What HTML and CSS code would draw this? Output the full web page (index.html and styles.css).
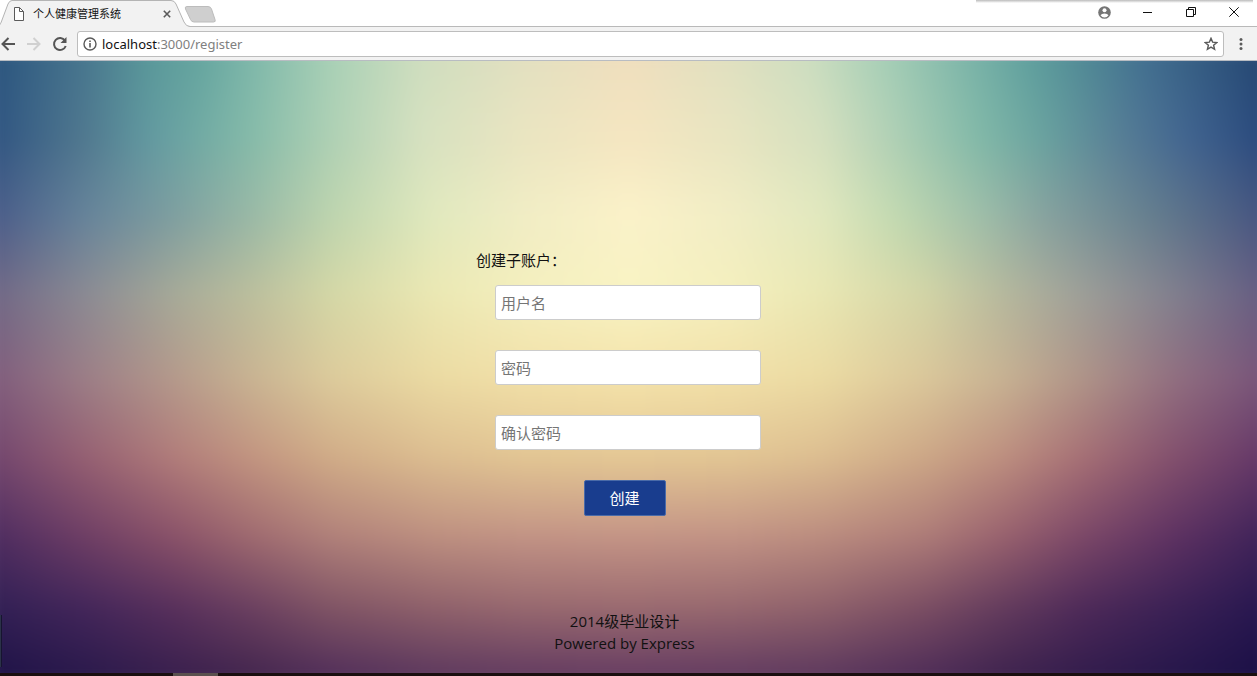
FILE: index.html
```html
<!DOCTYPE html>
<html lang="zh-CN">
<head>
<meta charset="UTF-8">
<meta name="viewport" content="width=device-width, initial-scale=1.0">
<title>个人健康管理系统</title>
<link rel="stylesheet" href="styles.css">
</head>
<body>
<header class="browser">
    <div class="tab-strip">
        <div class="tab">
            <svg class="tab-shape" viewBox="0 0 190 27" width="190" height="27">
                <path d="M-2 26.500C0 25 1 23 2 20L8 4Q9.500 .5 12 .5H171Q174.500 .5 176 4L184 22Q186 26.500 190 26.500V27H-2Z" fill="#f2f2f2"/>
                <path d="M-2 26.500C0 25 1 23 2 20L8 4Q9.500 .5 12 .5H171Q174.500 .5 176 4L184 22Q186 26.500 190 26.500" fill="none" stroke="#b4b4b4"/>
            </svg>
            <svg class="tab-file" viewBox="0 0 12 14" width="12" height="14" fill="none" stroke="#5a5a5a">
                <path d="M1.500 .5H6.500L10.500 4.500V13.500H1.500Z" fill="#fff"/>
                <path d="M6.500 .5V4.500H10.500"/>
            </svg>
            <span class="tab-title">个人健康管理系统</span>
            <button class="tab-close" aria-label="关闭标签页">
                <svg viewBox="0 0 8 8" width="8" height="8" stroke="#5a5a5a" stroke-width="1.600"><path d="M.8 .8L7.200 7.200M7.200 .8L.8 7.200"/></svg>
            </button>
        </div>
        <button class="new-tab" aria-label="新标签页">
            <svg viewBox="0 0 34 18" width="34" height="18"><path d="M3 1.500H24Q26.500 1.500 27.500 4L31 14.500Q32 17 29.500 17H10Q7.500 17 6.500 14.500L1.500 4Q.5 1.500 3 1.500Z" fill="#cfcfcf" stroke="#bcbcbc"/></svg>
        </button>
        <div class="window-buttons">
            <button aria-label="用户">
                <svg viewBox="0 0 13 13" width="13" height="13"><circle cx="6.500" cy="6.500" r="6.300" fill="#757575"/><circle cx="6.500" cy="4.300" r="2" fill="#fff"/><path d="M2.500 9.200Q3.500 7.400 6.500 7.400T10.500 9.200Q9 11.400 6.500 11.400T2.500 9.200Z" fill="#fff"/></svg>
            </button>
            <button aria-label="最小化">
                <svg viewBox="0 0 10 10" width="10" height="10"><path d="M0 5.500H9" stroke="#111"/></svg>
            </button>
            <button aria-label="还原">
                <svg viewBox="0 0 10 10" width="10" height="10" fill="none" stroke="#111"><path d="M.5 2.500H7.500V9.500H.5ZM2.500 2.500V.5H9.500V7.500H7.500"/></svg>
            </button>
            <button aria-label="关闭">
                <svg viewBox="0 0 10 10" width="10" height="10" stroke="#111"><path d="M.3 .3L9.700 9.700M9.700 .3L.3 9.700"/></svg>
            </button>
        </div>
        <div class="edge-shadow"></div>
    </div>
    <div class="toolbar">
        <button aria-label="后退">
            <svg viewBox="0 0 16 16" width="16" height="16" fill="none" stroke="#555" stroke-width="2"><path d="M15 8H3M8.500 2L2.500 8L8.500 14"/></svg>
        </button>
        <button aria-label="前进">
            <svg viewBox="0 0 16 16" width="16" height="16" fill="none" stroke="#d0d0d0" stroke-width="2"><path d="M1 8H13M7.500 2L13.500 8L7.500 14"/></svg>
        </button>
        <button aria-label="刷新">
            <svg viewBox="0 0 16 16" width="16" height="16"><path d="M13 4.600A6 6 0 1 0 13.700 10" fill="none" stroke="#555" stroke-width="2"/><path d="M14.500 1V7H8.500Z" fill="#555"/></svg>
        </button>
        <div class="address">
            <svg viewBox="0 0 14 14" width="14" height="14"><circle cx="7" cy="7" r="6" fill="none" stroke="#5a5a5a" stroke-width="1.400"/><path d="M7 6V10.500M7 3.400V5" stroke="#5a5a5a" stroke-width="1.600"/></svg>
            <span class="url">localhost<span class="url-path">:3000/register</span></span>
            <svg viewBox="0 0 14 14" width="14" height="14"><path d="M7 1.300L8.600 5.100L12.800 5.500L9.600 8.200L10.600 12.300L7 10.100L3.400 12.300L4.400 8.200L1.200 5.500L5.400 5.100Z" fill="none" stroke="#5a5a5a" stroke-width="1.400"/></svg>
        </div>
        <button class="menu" aria-label="菜单">
            <svg viewBox="0 0 4 14" width="4" height="14" fill="#5a5a5a"><circle cx="2" cy="2.500" r="1.500"/><circle cx="2" cy="7" r="1.500"/><circle cx="2" cy="11.500" r="1.500"/></svg>
        </button>
    </div>
</header>

<main class="page">
    <div class="backdrop">
        <!-- each band fades into the next one down the page -->
        <div class="bands">
            <div class="band band-1"></div>
            <div class="band band-2"></div>
            <div class="band band-3"></div>
            <div class="band band-4"></div>
            <div class="band band-5"></div>
            <div class="band band-6"></div>
            <div class="band band-7"></div>
            <div class="band band-8"></div>
            <div class="band band-9"></div>
        </div>
        <div class="side-handle"></div>
    </div>
    <form class="register">
        <h1>创建子账户：</h1>
        <input type="text" name="username" placeholder="用户名" aria-label="用户名">
        <input type="password" name="password" placeholder="密码" aria-label="密码">
        <input type="password" name="confirm" placeholder="确认密码" aria-label="确认密码">
        <button type="submit">创建</button>
    </form>
    <footer>
        <p>2014级毕业设计</p>
        <p>Powered by Express</p>
    </footer>
</main>
<div class="taskbar"><span></span></div>
</body>
</html>
```
FILE: styles.css
```css
* {
    box-sizing: border-box;
}
body {
    margin: 0;
    min-height: 100vh;
    display: flex;
    flex-direction: column;
    font-family: "Open Sans", "Noto Sans CJK SC", sans-serif;
    font-size: 15px;
    line-height: 22px;
    color: #111;
}
button {
    border: none;
    background: none;
    padding: 0;
    font: inherit;
}
svg {
    display: block;
}

/* browser frame */
.tab-strip {
    position: relative;
    display: flex;
    height: 27px;
    background-color: #fff;
    border-bottom: 1px solid #b9b9b9;
}
.tab {
    position: relative;
    display: flex;
    align-items: center;
    width: 184px;
    height: 27px;
    padding: 0 13px;
}
.tab-shape {
    position: absolute;
    left: 0;
    top: 0;
}
.tab-file,
.tab-title,
.tab-close {
    position: relative;
}
.tab-title {
    flex: 1;
    margin-left: 8px;
    font-size: 11px;
}
.new-tab {
    height: 27px;
}
.window-buttons {
    display: flex;
    align-items: center;
    height: 24px;
    margin: 0 2px 0 auto;
}
.window-buttons button {
    display: flex;
    justify-content: center;
    width: 43px;
}
.edge-shadow {
    position: absolute;
    right: 4px;
    top: 0;
    width: 22%;
    height: 3px;
    background: linear-gradient(#bbb, #fff);
}
.toolbar {
    display: flex;
    align-items: center;
    gap: 10px;
    height: 34px;
    background-color: #f2f2f2;
    border-bottom: 1px solid #b8bcc2;
}
.address {
    flex: 1;
    display: flex;
    align-items: center;
    gap: 5px;
    height: 26px;
    margin-left: -1px;
    padding: 0 5px;
    background-color: #fff;
    border: 1px solid #bdbdbd;
    border-radius: 3px;
}
.url {
    flex: 1;
    font-family: "Noto Sans", sans-serif;
    font-size: 13px;
}
.url-path {
    color: #808080;
}
.menu {
    margin: 0 14px 0 5px;
}

/* register page */
.page {
    position: relative;
    flex: 1;
    display: flex;
    flex-direction: column;
    align-items: center;
    padding: 188px 8px 19px 0;
}
.backdrop {
    position: absolute;
    inset: 0;
    z-index: -1;
    overflow: hidden;
}
.bands {
    position: absolute;
    inset: -20px;
    filter: blur(10px);
}
.band {
    position: absolute;
    inset: 0;
}
.band-1 {
    background: linear-gradient(90deg, #27507c, #48768e 8%, #5a989a 13%, #66a6a0 17%, #7fb8aa 21%, #a8d0b6 27%, #cfdebf 34%, #e3e0c0 42%, #f0dfbe 50%, #e0e0c0 58%, #cddec0 64%, #a5ceb6 70%, #78b2a7 77%, #60a09e 81%, #528b96 85%, #426f90 90%, #22426f);
}
.band-2 {
    background: linear-gradient(90deg, #2c5080, #50788f 8%, #6299a0 13%, #72aba4 17%, #86bba9 21%, #aed0b4 27%, #d6e1c0 34%, #eae5c1 42%, #f5e6c1 50%, #e8e5c1 58%, #d5e0bf 65%, #acceb4 71%, #82b9a8 77%, #6aa29f 82%, #577e96 88%, #426590 93%, #26457a);
    mask-image: linear-gradient(transparent 3%, #000 15%);
}
.band-3 {
    background: linear-gradient(90deg, #475787, #66839a 8%, #7f9fa0 15%, #9ab9a6 21%, #bdd4ae 27%, #e1e9be 35%, #f1edc5 42%, #fbf2c9 50%, #f1edc5 58%, #e1e8be 65%, #c0d8b0 71%, #a0bfa9 77%, #88a39f 82%, #67808f 90%, #43507f);
    mask-image: linear-gradient(transparent 15%, #000 27%);
}
.band-4 {
    background: linear-gradient(90deg, #6d6384, #8b8a93 8%, #a7aa98 15%, #bcbf9d 21%, #d4d7a6 27%, #ebe8b3 35%, #f4efbd 42%, #f8f3c3 50%, #f4efbd 58%, #e9e7b3 65%, #d2d4a6 73%, #b6b89d 79%, #9e9f98 85%, #82808e 92%, #625880);
    mask-image: linear-gradient(transparent 27%, #000 39%);
}
.band-5 {
    background: linear-gradient(90deg, #7d587b, #9c7d86 8%, #b5998b 15%, #c9b392 21%, #dcca9b 27%, #ebdaa2 35%, #f1dfa7 42%, #f4e2a9 50%, #f1dfa7 58%, #ebdaa2 65%, #dac69a 73%, #c7b192 79%, #b09488 85%, #926f80 92%, #755078);
    mask-image: linear-gradient(transparent 39%, #000 52%);
}
.band-6 {
    background: linear-gradient(90deg, #6e426d, #955f72 8%, #b17c7a 15%, #c29480 21%, #d0ab87 27%, #dcbd90 35%, #e2c593 42%, #e4c794 50%, #e2c593 58%, #dcbd90 65%, #cca686 73%, #bd8e7f 79%, #a66f75 85%, #83506d 92%, #603467);
    mask-image: linear-gradient(transparent 52%, #000 64%);
}
.band-7 {
    background: linear-gradient(90deg, #4a2a60, #6e3e65 8%, #8a5269 15%, #9f6a70 21%, #b0807a 27%, #bd8f80 35%, #c29385 42%, #c49486 50%, #c29385 58%, #bb8c7f 65%, #ad7b78 73%, #98616e 79%, #7c4868 85%, #5e3262 92%, #3b2158);
    mask-image: linear-gradient(transparent 64%, #000 76%);
}
.band-8 {
    background: linear-gradient(90deg, #2f1f54, #43265a 8%, #58305c 15%, #6b4060 21%, #805465 27%, #8f616b 35%, #97686f 42%, #9a6a70 50%, #97686f 58%, #8f616b 65%, #7a4d63 73%, #633b5d 79%, #4e2a59 85%, #3b2155 92%, #25164f);
    mask-image: linear-gradient(transparent 76%, #000 87%);
}
.band-9 {
    background: linear-gradient(90deg, #1e1247, #2b1a4c 8%, #3a204e 15%, #45274f 21%, #53305a 27%, #5f3a5e 35%, #653d61 42%, #683e62 50%, #653d61 58%, #5f3a5e 65%, #502e58 73%, #40244f 79%, #341d4d 85%, #27174b 92%, #1a0f46);
    mask-image: linear-gradient(transparent 87%, #000 97%);
}
.side-handle {
    position: absolute;
    left: 0;
    bottom: 6px;
    width: 2px;
    height: 52px;
    background-color: #2b3248;
    border-right: 1px solid #171430;
}
.register {
    display: flex;
    flex-direction: column;
    width: 297px;
}
.register h1 {
    margin: 0 0 14px;
    font-size: 15px;
    font-weight: normal;
}
.register input {
    height: 35px;
    margin: 0 12px 30px 19px;
    padding: 0 5px;
    border: 1px solid #ccc;
    border-radius: 3px;
    background-color: #fff;
    font: inherit;
}
.register input::placeholder {
    color: #757575;
}
.register button {
    align-self: center;
    width: 82px;
    height: 36px;
    border: 1px solid #4a6ba8;
    border-radius: 2px;
    background-color: #193d8e;
    color: #fff;
    cursor: pointer;
}
footer {
    margin-top: auto;
    text-align: center;
}
footer p {
    margin: 0;
}
.taskbar {
    height: 3px;
    padding-left: 173px;
    background-color: #1a0f10;
}
.taskbar span {
    display: block;
    width: 45px;
    height: 3px;
    background-color: #5a504e;
}
```
